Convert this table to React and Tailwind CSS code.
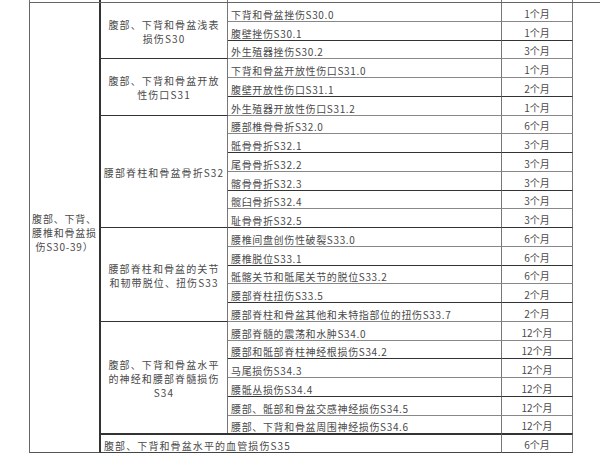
const groups = [
  {
    label: ["腹部、下背和骨盆浅表", "损伤S30"],
    rows: [
      ["下背和骨盆挫伤S30.0", "1个月"],
      ["腹壁挫伤S30.1", "1个月"],
      ["外生殖器挫伤S30.2", "3个月"],
    ],
  },
  {
    label: ["腹部、下背和骨盆开放", "性伤口S31"],
    rows: [
      ["下背和骨盆开放性伤口S31.0", "1个月"],
      ["腹壁开放性伤口S31.1", "2个月"],
      ["外生殖器开放性伤口S31.2", "1个月"],
    ],
  },
  {
    label: ["腰部脊柱和骨盆骨折S32"],
    rows: [
      ["腰部椎骨骨折S32.0", "6个月"],
      ["骶骨骨折S32.1", "3个月"],
      ["尾骨骨折S32.2", "3个月"],
      ["髂骨骨折S32.3", "3个月"],
      ["髋臼骨折S32.4", "3个月"],
      ["耻骨骨折S32.5", "3个月"],
    ],
  },
  {
    label: ["腰部脊柱和骨盆的关节", "和韧带脱位、扭伤S33"],
    rows: [
      ["腰椎间盘创伤性破裂S33.0", "6个月"],
      ["腰椎脱位S33.1", "6个月"],
      ["骶髂关节和骶尾关节的脱位S33.2", "6个月"],
      ["腰部脊柱扭伤S33.5", "2个月"],
      ["腰部脊柱和骨盆其他和未特指部位的扭伤S33.7", "2个月"],
    ],
  },
  {
    label: ["腹部、下背和骨盆水平", "的神经和腰部脊髓损伤", "S34"],
    rows: [
      ["腰部脊髓的震荡和水肿S34.0", "12个月"],
      ["腰部和骶部脊柱神经根损伤S34.2", "12个月"],
      ["马尾损伤S34.3", "12个月"],
      ["腰骶丛损伤S34.4", "12个月"],
      ["腰部、骶部和骨盆交感神经损伤S34.5", "12个月"],
      ["腰部、下背和骨盆周围神经损伤S34.6", "12个月"],
    ],
  },
];

const spans = { 3: "row-span-3", 5: "row-span-5", 6: "row-span-6" };

export default function App() {
  return (
    <div className="w-[600px] h-[467px] bg-white overflow-hidden font-['Noto_Sans_CJK_SC',sans-serif] text-[10px] text-[#4a4a4a]">
      {/* tail of the row above */}
      <div className="ml-[29px] grid grid-cols-[71px_127px_274px_71px] h-[2px] border-l border-[#777]">
        <div className="border-r-2 border-[#333]" />
        <div className="border-r border-[#777]" />
        <div className="border-r border-[#777]" />
        <div className="border-r border-[#777]" />
      </div>

      <div className="ml-[29px] grid grid-cols-[71px_127px_274px_71px] grid-rows-[repeat(24,18.75px)] border-l border-t border-[#666]">
        <div className="row-span-24 border-r-2 border-b border-r-[#333] border-b-[#555] flex items-center justify-center text-center leading-[14px] tracking-[0.8px] pt-[10px]">
          <div>
            腹部、下背、
            <br />
            腰椎和骨盆损
            <br />
            伤S30-39）
          </div>
        </div>

        {groups.map((g, gi) => [
          <div
            key={"g" + gi}
            className={`${spans[g.rows.length]} border-r border-b border-r-[#777] border-b-[#333] flex items-center justify-center text-center leading-[14px] tracking-[1.1px] whitespace-nowrap pt-[3px]`}
          >
            <div>
              {g.label.map((l, li) => (
                <div key={li}>{l}</div>
              ))}
            </div>
          </div>,
          ...g.rows.map((r, ri) => [
            <div
              key={`a${gi}-${ri}`}
              className={`border-r border-b border-r-[#777] ${ri % 2 === 1 ? "border-b-[#333]" : "border-b-[#888]"} flex items-end pl-[3px] leading-[13px] tracking-[0.65px] whitespace-nowrap overflow-hidden`}
            >
              {r[0]}
            </div>,
            <div
              key={`b${gi}-${ri}`}
              className={`border-r border-b border-r-[#777] ${ri % 2 === 1 ? "border-b-[#333]" : "border-b-[#888]"} flex items-end justify-center pb-[1px] leading-[13px]`}
            >
              {r[1]}
            </div>,
          ]),
        ])}

        <div className="col-span-2 border-r border-b border-r-[#777] border-b-[#444] flex items-end pl-[3px] leading-[13px] tracking-[1.1px] border-t-2 border-t-[#333] -mt-[1px]">
          腹部、下背和骨盆水平的血管损伤S35
        </div>
        <div className="border-r border-b border-r-[#777] border-b-[#444] flex items-end justify-center pb-[1px] leading-[13px] border-t-2 border-t-[#333] -mt-[1px]">
          6个月
        </div>
      </div>
    </div>
  );
}
